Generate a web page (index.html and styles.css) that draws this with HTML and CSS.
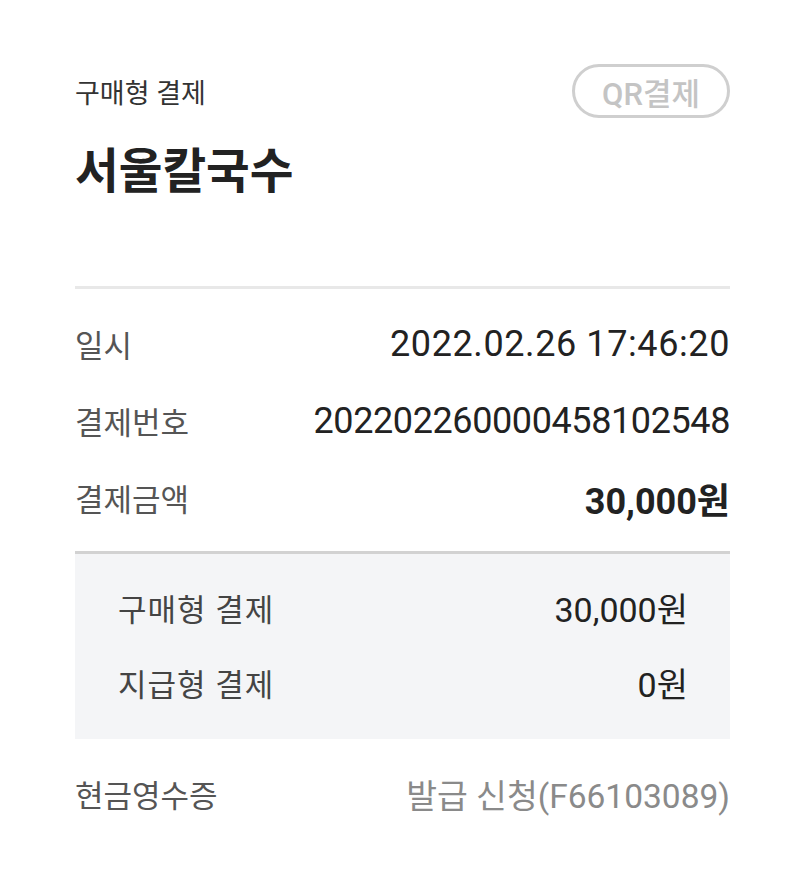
FILE: index.html
```html
<!DOCTYPE html>
<html lang="ko">
<head>
    <meta charset="UTF-8">
    <meta name="viewport" content="width=device-width, initial-scale=1.0">
    <title>결제 상세</title>
    <link rel="stylesheet" href="styles.css">
</head>
<body>
    <div class="receipt">
        <div class="header">
            <span class="pay-type">구매형 결제</span>
            <button class="qr-btn">QR결제</button>
        </div>
        <h1 class="store">서울칼국수</h1>

        <div class="divider"></div>

        <div class="rows">
            <div class="row">
                <span class="label">일시</span>
                <span class="value date">2022.02.26 17:46:20</span>
            </div>
            <div class="row">
                <span class="label">결제번호</span>
                <span class="value order-no">202202260000458102548</span>
            </div>
            <div class="row">
                <span class="label">결제금액</span>
                <span class="value total">30,000원</span>
            </div>
        </div>

        <div class="divider dark"></div>

        <div class="breakdown">
            <div class="sub-row">
                <span class="sub-label">구매형 결제</span>
                <span class="sub-value">30,000원</span>
            </div>
            <div class="sub-row">
                <span class="sub-label">지급형 결제</span>
                <span class="sub-value">0원</span>
            </div>
        </div>

        <div class="row receipt-row">
            <span class="label">현금영수증</span>
            <span class="value muted">발급 신청(F66103089)</span>
        </div>
    </div>
</body>
</html>
```

FILE: styles.css
```css
body {
    margin: 0;
    padding: 0;
    background-color: #fff;
    font-family: Roboto, "Noto Sans CJK KR", sans-serif;
    color: #222;
}

.receipt {
    padding: 64px 70px 0 75px;
}

.header {
    display: flex;
    justify-content: space-between;
    align-items: center;
    height: 54px;
}

.pay-type {
    font-size: 27px;
    color: #333;
}

.qr-btn {
    box-sizing: border-box;
    width: 158px;
    height: 54px;
    border: 3px solid #cfcfcf;
    border-radius: 27px;
    background: #fff;
    color: #c4c4c4;
    font-family: Roboto, "Noto Sans CJK KR", sans-serif;
    font-size: 31px;
    font-weight: 500;
    padding: 0;
}

.store {
    margin: 26px 0 0;
    font-size: 47.5px;
    line-height: 56px;
    font-weight: 700;
    color: #222;
}

.divider {
    height: 3px;
    margin-top: 86px;
    background-color: #e8e8e8;
}

.divider.dark {
    margin-top: 15px;
    background-color: #d2d2d2;
}

.rows {
    padding-top: 16px;
}

.row {
    display: flex;
    justify-content: space-between;
    align-items: center;
    height: 77px;
}

.label {
    font-size: 31px;
    color: #555;
}

.value {
    font-size: 36px;
    color: #222;
}

.value.date {
    letter-spacing: 0.6px;
}

.value.order-no {
    letter-spacing: -0.4px;
}

.value.total {
    font-weight: 700;
}

.value.muted {
    font-size: 33.5px;
    color: #8a8a8a;
}

.breakdown {
    background-color: #f4f5f7;
    padding: 16px 42px 19px 43px;
}

.sub-row {
    display: flex;
    justify-content: space-between;
    align-items: center;
    height: 75px;
}

.sub-label {
    font-size: 31px;
    letter-spacing: 1px;
    color: #444;
}

.sub-value {
    font-size: 34px;
    color: #222;
}

.receipt-row {
    margin-top: 16px;
}
```
